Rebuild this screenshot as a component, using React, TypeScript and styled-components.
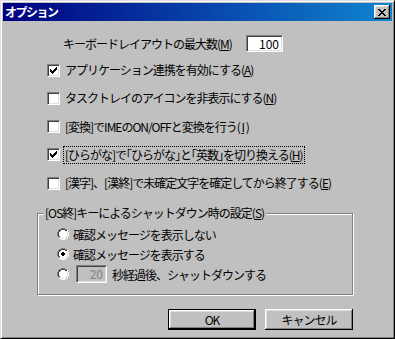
import React from "react";
import styled, { createGlobalStyle, css } from "styled-components";

const GlobalStyle = createGlobalStyle`
  html, body { margin: 0; padding: 0; background: #c0c0c0; }
  body {
    font-family: "Noto Sans CJK JP", "Noto Sans", sans-serif;
    font-size: 12px;
    color: #000;
  }
`;

const sunken = css`
  border: 1px solid;
  border-color: #808080 #fff #fff #808080;
  box-shadow: inset 1px 1px #404040, inset -1px -1px #dfdfdf;
`;

const Window = styled.div`
  width: 395px;
  height: 339px;
  box-sizing: border-box;
  background: #c0c0c0;
  border: 1px solid;
  border-color: #dfdfdf #000 #000 #dfdfdf;
  box-shadow: inset 1px 1px #fff, inset -1px -1px #808080;
  padding: 2px;
  display: flex;
  flex-direction: column;
`;

const TitleBar = styled.div`
  height: 18px;
  flex: none;
  display: flex;
  align-items: center;
  justify-content: space-between;
  padding: 0 2px;
  background: linear-gradient(90deg, #000080, #1084d0);
`;

const Title = styled.span`
  color: #fff;
  font-weight: bold;
  letter-spacing: -1.5px;
  line-height: 18px;
`;

const CloseButton = styled.div`
  width: 16px;
  height: 14px;
  box-sizing: border-box;
  background: #c0c0c0;
  box-shadow: inset -1px -1px #000, inset 1px 1px #fff, inset -2px -2px #808080, inset 2px 2px #dfdfdf;
  display: flex;
  align-items: center;
  justify-content: center;
`;

const Body = styled.div`
  flex: 1;
  display: flex;
  flex-direction: column;
  letter-spacing: -1px;
`;

const MaxRow = styled.div`
  margin-top: 12px;
  height: 20px;
  padding-left: 60px;
  display: grid;
  grid-template-columns: 183px 37px;
  align-items: center;
`;

const NumberBox = styled.div<{ $disabled?: boolean }>`
  ${sunken};
  box-sizing: border-box;
  width: ${(p) => (p.$disabled ? 31 : 37)}px;
  height: ${(p) => (p.$disabled ? 18 : 17)}px;
  background: ${(p) => (p.$disabled ? "#c0c0c0" : "#fff")};
  color: ${(p) => (p.$disabled ? "#808080" : "#000")};
  text-align: right;
  padding-right: 3px;
  line-height: 15px;
  letter-spacing: 0;
`;

const CheckList = styled.div`
  margin-top: 3px;
  display: flex;
  flex-direction: column;
`;

const CheckRow = styled.div`
  height: 28.25px;
  padding-left: 44px;
  display: flex;
  align-items: center;
`;

const Box = styled.div`
  ${sunken};
  box-sizing: border-box;
  width: 13px;
  height: 13px;
  background: #fff;
  display: flex;
  align-items: center;
  justify-content: center;
  flex: none;
`;

const Label = styled.span<{ $focus?: boolean }>`
  margin-left: 3px;
  padding: 0 1px;
  line-height: 16px;
  border: 1px dotted ${(p) => (p.$focus ? "#000" : "transparent")};
  white-space: nowrap;
`;

const U = styled.span`
  text-decoration: underline;
  text-underline-offset: 1px;
`;

const Group = styled.div`
  position: relative;
  margin: 15.75px 0 0 34px;
  width: 316px;
  height: 82px;
  box-sizing: border-box;
  border: 1px solid #808080;
  box-shadow: inset 1px 1px #fff, 1px 1px #fff;
  padding: 10px 0 0 19px;
  display: flex;
  flex-direction: column;
`;

const Legend = styled.span`
  position: absolute;
  top: -9px;
  left: 5px;
  padding: 0 2px 0 2px;
  background: #c0c0c0;
  line-height: 16px;
  white-space: nowrap;
`;

const RadioRow = styled.div`
  height: 20px;
  display: flex;
  align-items: center;
`;

const RadioText = styled.span<{ $gap?: number }>`
  margin-left: ${(p) => p.$gap ?? 4}px;
  white-space: nowrap;
`;

const Spacer = styled.span`
  width: 7px;
  flex: none;
`;

const ButtonBar = styled.div`
  margin-top: 14px;
  padding-right: 39px;
  display: flex;
  justify-content: flex-end;
  gap: 9px;
`;

const Button = styled.div<{ $default?: boolean }>`
  width: 88px;
  height: 21px;
  box-sizing: border-box;
  display: flex;
  align-items: center;
  justify-content: center;
  background: #c0c0c0;
  box-shadow: inset -1px -1px #000, inset 1px 1px #fff, inset -2px -2px #808080, inset 2px 2px #dfdfdf;
  ${(p) =>
    p.$default &&
    css`
      border: 1px solid #000;
    `}
`;

function CheckBox({ checked }: { checked?: boolean }) {
  return (
    <Box>
      {checked && (
        <svg width="7" height="7" viewBox="0 0 7 7" shapeRendering="crispEdges">
          <path d="M0 2h1v3h-1zM1 3h1v3h-1zM2 4h1v3h-1zM3 3h1v3h-1zM4 2h1v3h-1zM5 1h1v3h-1zM6 0h1v3h-1z" fill="#000" />
        </svg>
      )}
    </Box>
  );
}

function Radio({ checked }: { checked?: boolean }) {
  return (
    <svg width="12" height="12" viewBox="0 0 12 12" shapeRendering="crispEdges" style={{ flex: "none" }}>
      <path d="M4 0h4v1h-4zM2 1h2v1h-2zM8 1h2v1h-2zM1 2h1v2h-1zM0 4h1v4h-1zM1 8h1v2h-1z" fill="#808080" />
      <path d="M4 1h4v1h-4zM2 2h2v1h-2zM8 2h2v1h-2zM2 3h1v1h-1zM1 4h1v4h-1zM2 8h1v1h-1z" fill="#404040" />
      <path d="M10 2h1v2h-1zM11 4h1v4h-1zM10 8h1v2h-1zM8 10h2v1h-2zM4 11h4v1h-4zM2 10h2v1h-2z" fill="#fff" />
      <path d="M9 3h1v1h-1zM10 4h1v4h-1zM9 8h1v1h-1zM8 9h1v1h-1zM4 10h4v1h-4zM3 9h1v1h-1z" fill="#dfdfdf" />
      <path d="M4 2h4v1h1v1h1v4h-1v1h-1v1h-4v-1h-1v-1h-1v-4h1v-1h1z" fill="#fff" />
      {checked && <path d="M5 4h2v1h1v2h-1v1h-2v-1h-1v-2h1z" fill="#000" />}
    </svg>
  );
}

export default function App() {
  return (
    <>
      <GlobalStyle />
      <Window>
        <TitleBar>
          <Title>オプション</Title>
          <CloseButton>
            <svg width="8" height="7" viewBox="0 0 8 7" shapeRendering="crispEdges">
              <path d="M0 0h2v1h1v1h2v-1h1v-1h2v1h-1v1h-1v1h-1v1h1v1h1v1h1v1h-2v-1h-1v-1h-2v1h-1v1h-2v-1h1v-1h1v-1h1v-1h-1v-1h-1v-1h-1z" fill="#000" />
            </svg>
          </CloseButton>
        </TitleBar>
        <Body>
          <MaxRow>
            <span>
              キーボードレイアウトの最大数(<U>M</U>)
            </span>
            <NumberBox>100</NumberBox>
          </MaxRow>
          <CheckList>
            <CheckRow>
              <CheckBox checked />
              <Label>
                アプリケーション連携を有効にする(<U>A</U>)
              </Label>
            </CheckRow>
            <CheckRow>
              <CheckBox />
              <Label>
                タスクトレイのアイコンを非表示にする(<U>N</U>)
              </Label>
            </CheckRow>
            <CheckRow>
              <CheckBox />
              <Label>
                [変換]でIMEのON/OFFと変換を行う( <U>I</U> )
              </Label>
            </CheckRow>
            <CheckRow>
              <CheckBox checked />
              <Label $focus>
                [ひらがな]で｢ひらがな｣と｢英数｣を切り換える(<U>H</U>)
              </Label>
            </CheckRow>
            <CheckRow>
              <CheckBox />
              <Label>
                [漢字]、[漢終]で未確定文字を確定してから終了する(<U>E</U>)
              </Label>
            </CheckRow>
          </CheckList>
          <Group>
            <Legend>
              [OS終]キーによるシャットダウン時の設定(<U>S</U>)
            </Legend>
            <RadioRow>
              <Radio />
              <RadioText>確認メッセージを表示しない</RadioText>
            </RadioRow>
            <RadioRow>
              <Radio checked />
              <RadioText>確認メッセージを表示する</RadioText>
            </RadioRow>
            <RadioRow>
              <Radio />
              <Spacer />
              <NumberBox $disabled>20</NumberBox>
              <RadioText $gap={5}>秒経過後、シャットダウンする</RadioText>
            </RadioRow>
          </Group>
          <ButtonBar>
            <Button $default>OK</Button>
            <Button>キャンセル</Button>
          </ButtonBar>
        </Body>
      </Window>
    </>
  );
}
